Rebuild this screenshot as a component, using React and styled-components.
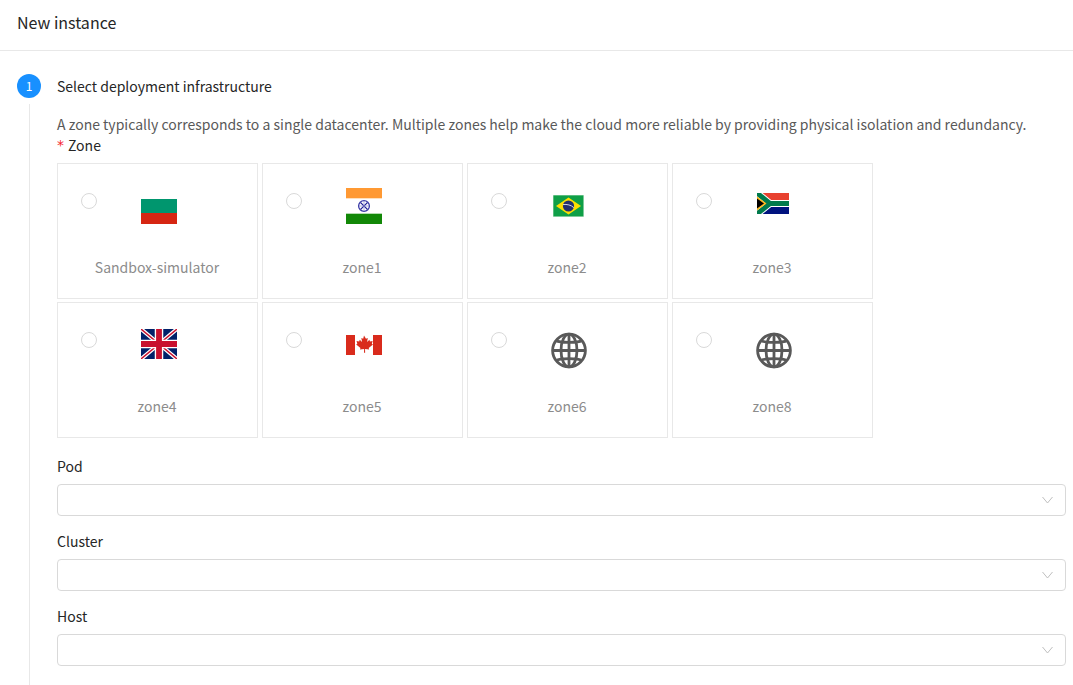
import React from "react";
import styled, { createGlobalStyle } from "styled-components";

const GlobalStyle = createGlobalStyle`
  html, body {
    margin: 0;
    padding: 0;
    background: #fff;
  }
  body {
    font-family: "Noto Sans CJK SC", "Noto Sans", sans-serif;
    font-size: 14px;
    line-height: 21px;
    color: #262626;
  }
`;

const Page = styled.div`
  width: 1073px;
  height: 685px;
  overflow: hidden;
  display: flex;
  flex-direction: column;
`;

const Header = styled.header`
  height: 44px;
  flex: none;
  display: flex;
  align-items: center;
  padding: 0 17px 6px;
  font-size: 16px;
  border-bottom: 1px solid #e8e8e8;
`;

const Step = styled.section`
  flex: 1;
  display: flex;
  flex-direction: column;
  padding: 23px 7px 0 17px;
`;

const StepHead = styled.div`
  display: flex;
  align-items: center;
  gap: 16px;
  height: 24px;
`;

const StepNumber = styled.span`
  width: 24px;
  height: 24px;
  border-radius: 50%;
  background: #1890ff;
  color: #fff;
  font-size: 12px;
  line-height: 24px;
  text-align: center;
`;

const StepBody = styled.div`
  flex: 1;
  margin: 6px 0 0 12px;
  padding: 10px 0 0 27px;
  border-left: 1px solid #e8e8e8;
`;

const Description = styled.p`
  margin: 0;
  color: #595959;
  white-space: nowrap;
`;

const ZoneLabel = styled.div`
  display: flex;
  height: 21px;
`;

const Required = styled.span`
  width: 11px;
  color: #f5222d;
  font-family: "DejaVu Sans", sans-serif;
`;

const ZoneGrid = styled.div`
  display: grid;
  grid-template-columns: repeat(4, 201px);
  grid-auto-rows: 136px;
  column-gap: 4px;
  row-gap: 3px;
  margin: 7px 0 18px;
`;

const ZoneCard = styled.label`
  position: relative;
  display: flex;
  flex-direction: column;
  box-sizing: border-box;
  border: 1px solid #e8e8e8;
`;

const Radio = styled.span`
  position: absolute;
  left: 23px;
  top: 29px;
  width: 16px;
  height: 16px;
  box-sizing: border-box;
  border: 1px solid #d9d9d9;
  border-radius: 50%;
`;

const IconSlot = styled.div`
  height: 93px;
  flex: none;
  padding: ${(p) => p.$top}px 0 0 ${(p) => p.$left}px;
  box-sizing: border-box;
  svg {
    display: block;
  }
`;

const ZoneName = styled.div`
  text-align: center;
  color: #8c8c8c;
  line-height: 21px;
  padding-right: 1px;
`;

const Field = styled.div`
  margin-bottom: 15px;
`;

const FieldLabel = styled.div`
  margin-bottom: 7px;
`;

const Select = styled.div`
  width: 1009px;
  height: 32px;
  box-sizing: border-box;
  border: 1px solid #d9d9d9;
  border-radius: 4px;
  display: flex;
  align-items: center;
  justify-content: flex-end;
  padding-right: 12px;
`;

const Bulgaria = () => (
  <svg width="36" height="25" viewBox="0 0 36 25">
    <rect width="36" height="14" fill="#00966e" />
    <rect y="14" width="36" height="11" fill="#d62612" />
  </svg>
);

const India = () => (
  <svg width="36" height="36" viewBox="0 0 36 36">
    <rect width="36" height="36" fill="#fff" />
    <rect width="36" height="10" fill="#ff9933" />
    <rect y="10" width="36" height="1" fill="#ffe0bd" />
    <rect y="25" width="36" height="1" fill="#b5dcb0" />
    <rect y="26" width="36" height="10" fill="#128807" />
    <circle cx="18" cy="18" r="5.4" fill="none" stroke="#3c3ca8" strokeWidth="1.3" />
    <path d="M14.6 14.6l6.8 6.8M21.4 14.6l-6.8 6.8" stroke="#1f1f95" strokeWidth="1.3" />
    <path d="M18 13v10M13 18h10" stroke="#8f8fd0" strokeWidth="0.7" />
  </svg>
);

const Brazil = () => (
  <svg width="31" height="22" viewBox="0 0 31 22">
    <rect width="31" height="22" fill="#c8e8d2" />
    <rect x="0.4" y="0.4" width="30" height="21" fill="#0f9f47" />
    <path d="M15.5 2.5L28 11 15.5 19.5 3 11z" fill="#fedf00" />
    <circle cx="15.5" cy="11" r="5.6" fill="#24316f" />
    <path d="M10 9.6c4-.6 8 .4 10.8 3" fill="none" stroke="#fff" strokeWidth="0.8" />
  </svg>
);

const SouthAfrica = () => (
  <svg width="32" height="21" viewBox="0 0 32 21">
    <rect width="32" height="7" fill="#e8412f" />
    <rect y="14" width="32" height="7" fill="#00137f" />
    <path d="M0 0L13 10.5 0 21M13 10.5H32" fill="none" stroke="#fff" strokeWidth="7" />
    <path d="M0 0L13 10.5 0 21M13 10.5H32" fill="none" stroke="#007a4d" strokeWidth="5" />
    <path d="M0 3.5L9.5 10.5 0 17.5z" fill="#ffb81c" />
    <path d="M0 5.5L7 10.5 0 15.5z" fill="#000" />
  </svg>
);

const Britain = () => (
  <svg width="36" height="30" viewBox="0 0 36 30">
    <rect width="36" height="30" fill="#012169" />
    <path d="M0 0L36 30M36 0L0 30" stroke="#fff" strokeWidth="4" />
    <path d="M0 0L36 30M36 0L0 30" stroke="#c8102e" strokeWidth="1.4" />
    <path d="M18 0V30M0 15H36" stroke="#fff" strokeWidth="8.5" />
    <path d="M18 0V30M0 15H36" stroke="#c8102e" strokeWidth="5.8" />
  </svg>
);

const Canada = () => (
  <svg width="36" height="20" viewBox="0 0 36 20">
    <rect width="36" height="20" fill="#fff" />
    <rect width="9" height="20" fill="#d92b1c" />
    <rect x="27" width="9" height="20" fill="#d92b1c" />
    <path
      transform="translate(18 9.6) scale(1.15) translate(-18 -10)"
      d="M18 2l1.7 3 1.6-.8-.6 3.6 2-2 .5 1.4 2.3-.4-.7 2.5 1 .6-3.7 3 .4 1.4-3.6-.5.1 3.2h-1l.1-3.2-3.6.5.4-1.4-3.7-3 1-.6-.7-2.5 2.3.4.5-1.4 2 2-.6-3.6 1.6.8z"
      fill="#d92b1c"
    />
  </svg>
);

const Globe = () => (
  <svg width="36" height="37" viewBox="0 0 36 37" fill="none" stroke="#595959" strokeWidth="2.8">
    <circle cx="18" cy="18.5" r="16.4" />
    <ellipse cx="18" cy="18.5" rx="8" ry="16.4" />
    <path d="M18 2V35M1.6 18.5H34.4" />
    <path d="M5 8.5C9 11 27 11 31 8.5M5 28.5C9 26 27 26 31 28.5" />
  </svg>
);

const Chevron = () => (
  <svg width="11" height="8" viewBox="0 0 11 8" fill="none" stroke="#bfbfbf" strokeWidth="1">
    <path d="M.5 1L5.5 7l5-6" />
  </svg>
);

const zones = [
  { name: "Sandbox-simulator", Icon: Bulgaria, top: 35, left: 83 },
  { name: "zone1", Icon: India, top: 24, left: 83 },
  { name: "zone2", Icon: Brazil, top: 31, left: 85 },
  { name: "zone3", Icon: SouthAfrica, top: 29, left: 84 },
  { name: "zone4", Icon: Britain, top: 26, left: 83 },
  { name: "zone5", Icon: Canada, top: 32, left: 83 },
  { name: "zone6", Icon: Globe, top: 29, left: 83 },
  { name: "zone8", Icon: Globe, top: 29, left: 83 },
];

const fields = ["Pod", "Cluster", "Host"];

export default function App() {
  return (
    <Page>
      <GlobalStyle />
      <Header>New instance</Header>
      <Step>
        <StepHead>
          <StepNumber>1</StepNumber>
          <span>Select deployment infrastructure</span>
        </StepHead>
        <StepBody>
          <Description>
            A zone typically corresponds to a single datacenter. Multiple zones help make the cloud more reliable by providing physical isolation and redundancy.
          </Description>
          <ZoneLabel>
            <Required>*</Required>
            <span>Zone</span>
          </ZoneLabel>
          <ZoneGrid>
            {zones.map(({ name, Icon, top, left }) => (
              <ZoneCard key={name}>
                <Radio />
                <IconSlot $top={top} $left={left}>
                  <Icon />
                </IconSlot>
                <ZoneName>{name}</ZoneName>
              </ZoneCard>
            ))}
          </ZoneGrid>
          {fields.map((field) => (
            <Field key={field}>
              <FieldLabel>{field}</FieldLabel>
              <Select>
                <Chevron />
              </Select>
            </Field>
          ))}
        </StepBody>
      </Step>
    </Page>
  );
}
